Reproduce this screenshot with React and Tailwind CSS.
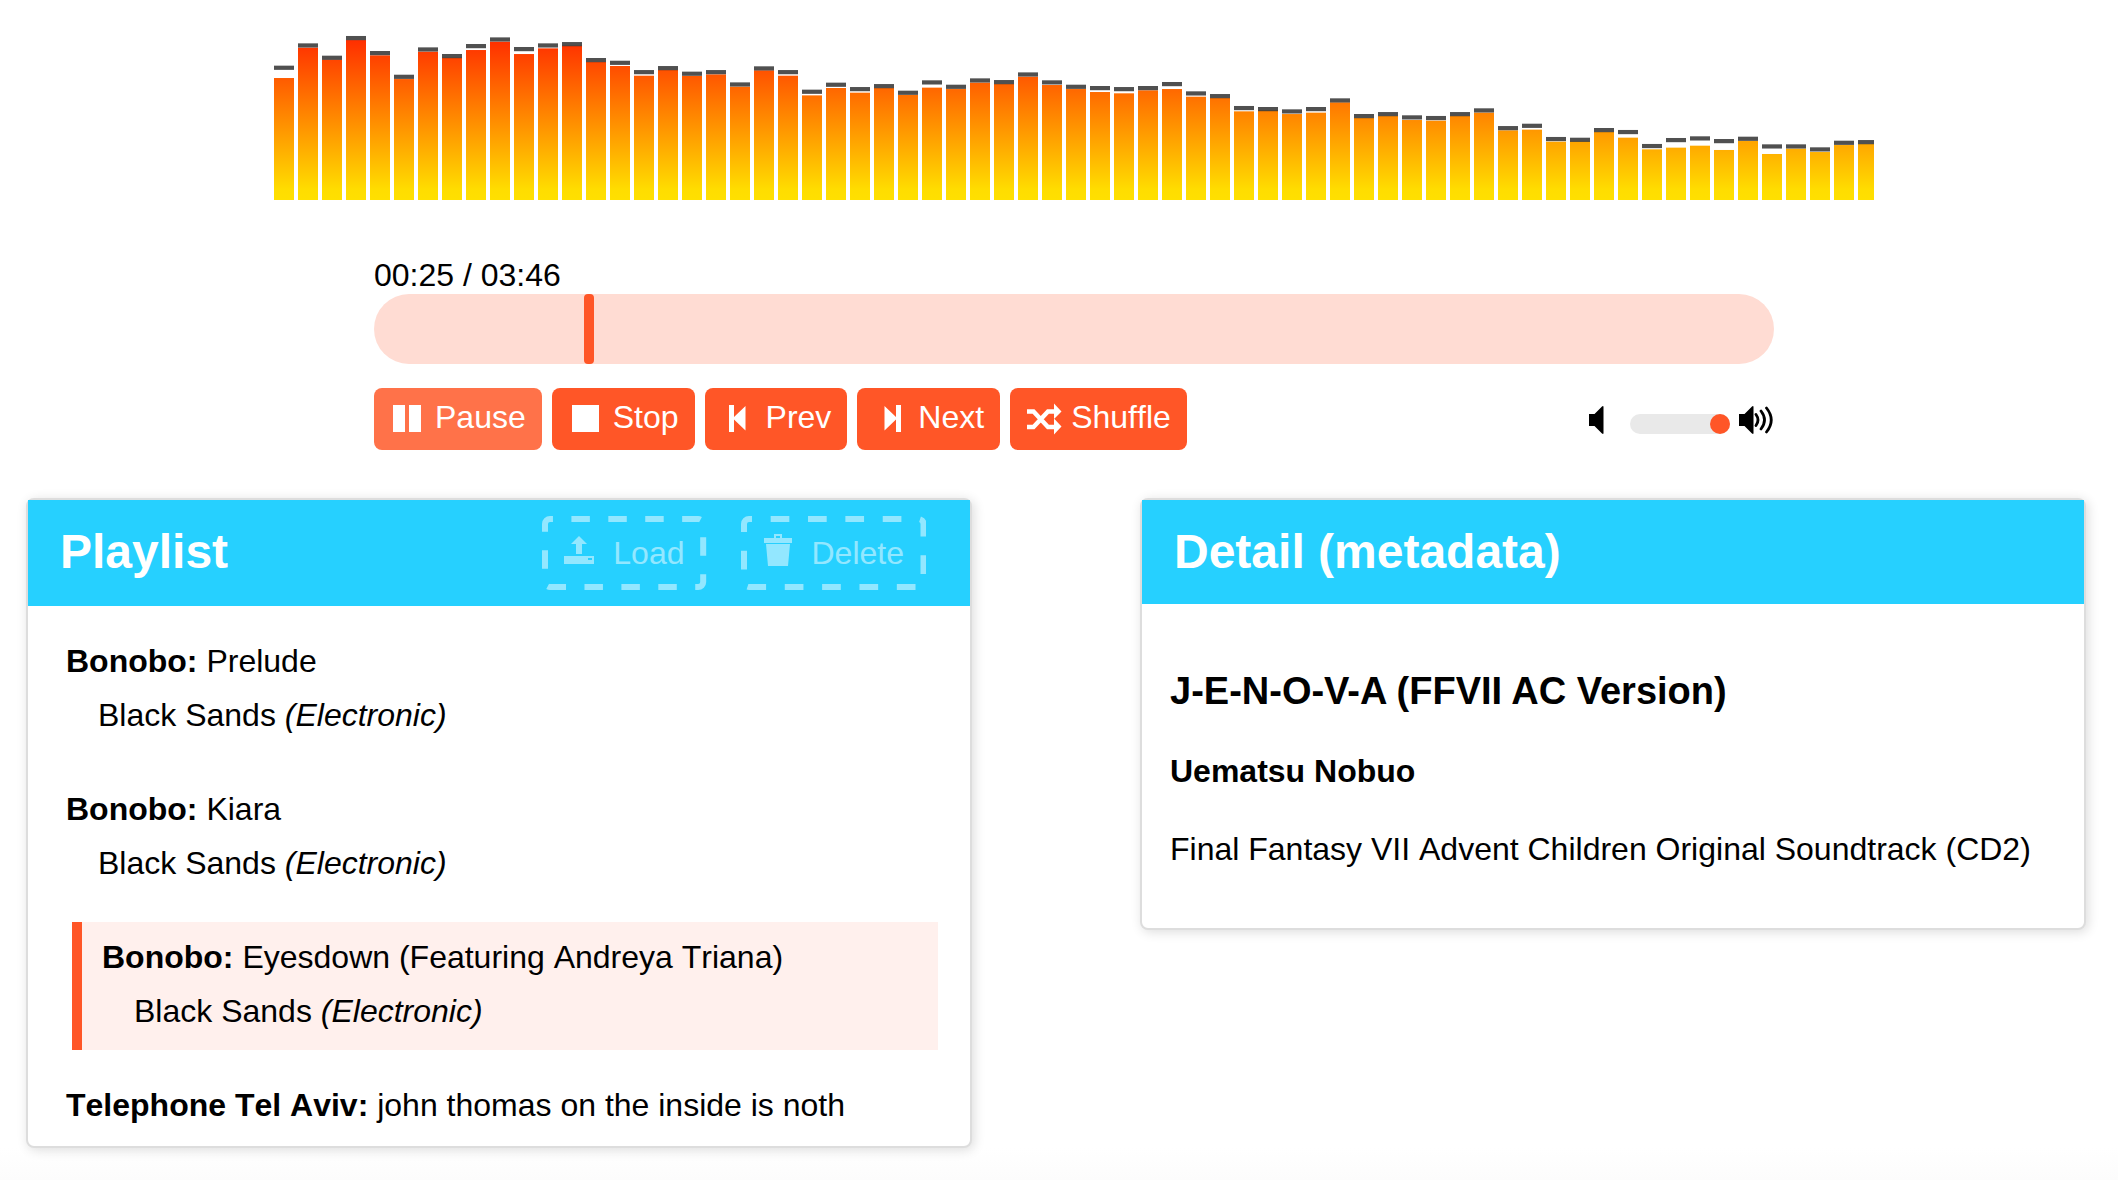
// Each entry is [peak level, bar level].
const SPECTRUM = [
  [141.8, 130.7], [165.7, 163.2], [152.5, 150.4], [173.6, 171.4], [157.5, 155], [132.1, 129.6],
  [161.4, 158.9], [154.3, 152.5], [165, 160.7], [172.1, 169.6], [161.8, 156.4], [165.7, 162.5],
  [167.1, 165.4], [150, 147.9], [147.1, 143.6], [137.1, 133.2], [141.4, 139.3], [135.4, 132.9],
  [137.1, 134.6], [123.9, 121.4], [141.1, 138.9], [137.1, 133.2], [116.1, 112.1], [123.6, 120],
  [118.9, 115], [122.1, 120], [115, 112.5], [126.1, 120.4], [121.4, 118.9], [128.2, 125.7],
  [126.4, 124.3], [134.6, 132.1], [126.1, 123.2], [121.4, 118.9], [120, 115.7], [118.9, 114.3],
  [120, 117.5], [124.3, 118.9], [114.3, 110.7], [111.4, 109.3], [98.6, 95], [97.5, 96.1],
  [95, 92.1], [97.5, 93.6], [106.8, 104.6], [90, 87.9], [92.1, 90], [88.6, 85.7],
  [87.9, 85], [92.1, 90], [96.1, 93.6], [77.1, 74.6], [79.6, 75.4], [65.4, 62.5],
  [64.6, 62.9], [75, 72.9], [72.9, 66.8], [57.9, 54.3], [64.3, 56.1], [66.1, 58.2],
  [63.2, 53.6], [65.7, 63.2], [57.5, 49.3], [57.5, 55], [54.3, 51.4], [61.4, 58.9], [62.1, 60],
];

const MAX_LEVEL = 214.3;
const CHART_HEIGHT = 200;
const toHeight = (level) => (level / MAX_LEVEL) * CHART_HEIGHT;

function Visualizer() {
  return (
    <svg viewBox="0 0 1600 200" className="block w-full" role="img" aria-label="Audio spectrum">
      <defs>
        <linearGradient id="heat" gradientUnits="userSpaceOnUse" x1="0" y1="0" x2="0" y2="200">
          <stop offset="0" stopColor="#ff0000" />
          <stop offset="0.950" stopColor="#ffdd00" />
          <stop offset="1" stopColor="#ffe000" />
        </linearGradient>
      </defs>
      {SPECTRUM.map(([cap, bar], i) => (
        <g key={i}>
          <rect x={i * 24} y={CHART_HEIGHT - toHeight(bar)} width="20" height={toHeight(bar)} fill="url(#heat)" />
          <rect
            x={i * 24}
            y={CHART_HEIGHT - 2 - toHeight(cap)}
            width="20"
            height="4.200"
            fill="#333"
            fillOpacity="0.86"
          />
        </g>
      ))}
    </svg>
  );
}

const ICONS = {
  pause: <path d="M3 2h12v27H3zM19 2h12v27H19z" />,
  stop: <path d="M4 2h27v27H4z" />,
  prev: <path d="M8 2h5v12l11.500-11v24.500l-11.500-11v12.500h-5z" />,
  next: <path d="M28 2h-5v12l-11.500-11v24.500l11.500-11v12.500h5z" />,
  shuffle: (
    <>
      <path d="M1 8.500h6.500L22 24h6M1 24h6.500L22 8.500h6" fill="none" stroke="currentColor" strokeWidth="4.400" />
      <path d="M28 .5l7.500 8-7.500 7.500zM28 15.500l7.500 8-7.500 8z" />
    </>
  ),
  load: <path fillRule="evenodd" d="M15-1l8 8h-5v10h-6V7H7zM0 19h30v8H0zM24 21v2h4v-2z" />,
  trash: (
    <path fillRule="evenodd" d="M11-3h8v4h10v5H1V1h10zM13-1v2h4v-2zM3 7h24l-2 22H5z" />
  ),
};

function Icon({ name }) {
  return (
    <svg viewBox="0 0 32 32" className="size-8 shrink-0 overflow-visible" fill="currentColor" aria-hidden="true">
      {ICONS[name]}
    </svg>
  );
}

function ControlButton({ icon, active, children }) {
  return (
    <button
      type="button"
      className={
        "flex h-[62px] items-center gap-[13px] rounded-lg px-4 text-white " +
        (active ? "bg-[#ff7249]" : "bg-[#ff5627]")
      }
    >
      <Icon name={icon} />
      <span className="pb-1">{children}</span>
    </button>
  );
}

function Speaker({ loud }) {
  return (
    <svg
      viewBox={loud ? "0 0 35 28" : "0 0 15 28"}
      className={loud ? "h-7 w-[35px]" : "h-7 w-[15px]"}
      aria-hidden="true"
    >
      <path d="M0 8h5.500L13 .5q1.500-1 1.500 .5v26q0 1.500-1.500 .5L5.500 20H0z" />
      {loud && (
        <path
          d="M17 8.500q4 5.500 0 11M22 5q7 9 0 18M27.500 2q9.500 12 0 24"
          fill="none"
          stroke="#000"
          strokeWidth="2.800"
          strokeLinecap="round"
        />
      )}
    </svg>
  );
}

// The outline is split into `dashes` equal dash-and-gap pairs.
function HeaderButton({ icon, dashes, children }) {
  return (
    <button
      type="button"
      className="relative flex h-[74px] items-center gap-[17px] rounded-lg px-[22px] text-white opacity-50"
    >
      <svg className="absolute inset-0 size-full" fill="none" aria-hidden="true">
        <rect
          x="3"
          y="3"
          rx="5"
          pathLength={dashes * 2}
          strokeDasharray="1 1"
          strokeDashoffset="-1.160"
          stroke="currentColor"
          strokeWidth="6"
          className="h-[calc(100%-6px)] w-[calc(100%-6px)]"
        />
      </svg>
      <Icon name={icon} />
      <span>{children}</span>
    </button>
  );
}

function Panel({ title, actions, children }) {
  return (
    <section className="rounded-lg border-2 border-[#ddd] bg-white shadow-[2px_2px_12px_rgba(0,0,0,0.14)]">
      <header className="flex items-start justify-between bg-[#26d0ff] py-4 pr-11 pl-8">
        <h2 className="text-5xl leading-[72px] font-bold text-white">{title}</h2>
        {actions}
      </header>
      {children}
    </section>
  );
}

function Track({ artist, title, album, genre, playing }) {
  return (
    <li
      className={
        "mr-8 pt-2 pb-3 pl-5 leading-[54px] " +
        (playing ? "ml-11 border-l-10 border-[#ff5627] bg-[#fff0ed]" : "ml-[18px]")
      }
    >
      <p>
        <b>{artist}:</b> {title}
      </p>
      {album && (
        <p className="pl-8">
          {album} <i>({genre})</i>
        </p>
      )}
    </li>
  );
}

export default function App() {
  return (
    <div className="font-['Liberation_Sans',Arial,sans-serif] text-[32px] leading-9 text-black [font-kerning:none]">
      <div className="flex flex-col items-center pr-8 pl-[62px]">
        <div className="w-full max-w-[1600px]">
          <Visualizer />
        </div>
        <div className="mt-[57px] w-full max-w-[1400px]">
          <p>00:25 / 03:46</p>
          <input
            type="range"
            aria-label="Seek"
            min="0"
            max="1390"
            defaultValue="210"
            className="mt-px block h-[70px] w-full appearance-none rounded-full bg-[#ffdcd3] [&::-webkit-slider-thumb]:h-[70px] [&::-webkit-slider-thumb]:w-[10px] [&::-webkit-slider-thumb]:appearance-none [&::-webkit-slider-thumb]:rounded-[4px] [&::-webkit-slider-thumb]:bg-[#ff5627]"
          />
          <div className="mt-6 flex items-center justify-between">
            <div className="flex gap-[10px]">
              <ControlButton icon="pause" active>Pause</ControlButton>
              <ControlButton icon="stop">Stop</ControlButton>
              <ControlButton icon="prev">Prev</ControlButton>
              <ControlButton icon="next">Next</ControlButton>
              <ControlButton icon="shuffle">Shuffle</ControlButton>
            </div>
            <div className="flex items-center pt-0.5">
              <Speaker />
              <input
                type="range"
                aria-label="Volume"
                min="0"
                max="100"
                defaultValue="100"
                className="mt-2 mr-[9px] ml-[26px] block h-5 w-[100px] appearance-none rounded-full bg-[#e9e9e9] [&::-webkit-slider-thumb]:size-5 [&::-webkit-slider-thumb]:appearance-none [&::-webkit-slider-thumb]:rounded-full [&::-webkit-slider-thumb]:bg-[#ff5627]"
              />
              <Speaker loud />
            </div>
          </div>
        </div>
      </div>

      <main className="mt-12 grid grid-cols-2 items-start gap-[168px] pr-8 pl-[26px]">
        <Panel
          title="Playlist"
          actions={
            <div className="flex gap-[34px]">
              <HeaderButton icon="load" dashes={12}>Load</HeaderButton>
              <HeaderButton icon="trash" dashes={13}>Delete</HeaderButton>
            </div>
          }
        >
          <ul className="flex flex-col gap-5 pt-5 pb-0.5">
            <Track artist="Bonobo" title="Prelude" album="Black Sands" genre="Electronic" />
            <Track artist="Bonobo" title="Kiara" album="Black Sands" genre="Electronic" />
            <Track artist="Bonobo" title="Eyesdown (Featuring Andreya Triana)" album="Black Sands" genre="Electronic" playing />
            <Track artist="Telephone Tel Aviv" title="john thomas on the inside is noth" />
          </ul>
        </Panel>
        <Panel title="Detail (metadata)">
          <div className="flex flex-col px-7 pt-[60px] pb-[52px]">
            <h3 className="text-[38px] leading-[54px] font-bold [font-kerning:normal]">J-E-N-O-V-A (FFVII AC Version)</h3>
            <p className="mt-[26px] leading-[54px] font-bold">Uematsu Nobuo</p>
            <p className="mt-6 leading-[54px]">Final Fantasy VII Advent Children Original Soundtrack (CD2)</p>
          </div>
        </Panel>
      </main>
      <div className="h-8 bg-linear-to-b from-transparent to-[#fcfcfc]" />
    </div>
  );
}
